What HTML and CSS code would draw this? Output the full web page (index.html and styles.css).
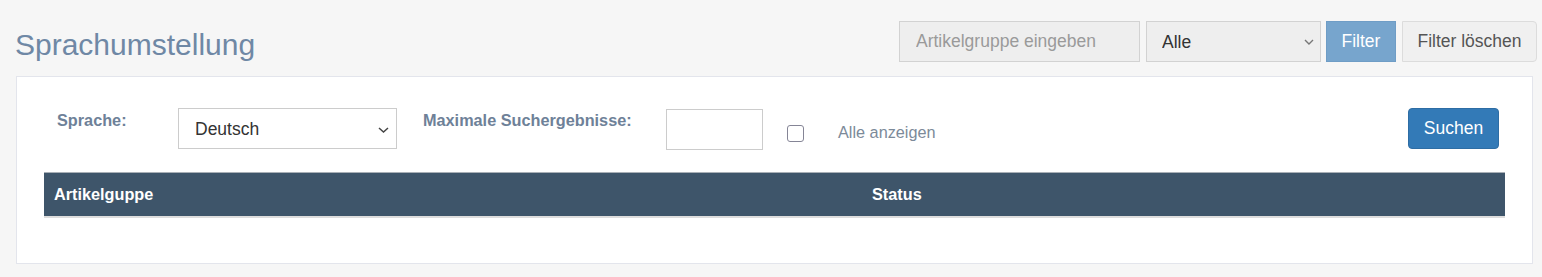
FILE: index.html
```html
<!DOCTYPE html>
<html lang="de">
<head>
<meta charset="utf-8">
<title>Sprachumstellung</title>
<link rel="stylesheet" href="styles.css">
</head>
<body>
<header class="page-header">
  <h1 class="page-title">Sprachumstellung</h1>
  <div class="toolbar">
    <input class="tb-input" type="text" placeholder="Artikelgruppe eingeben">
    <div class="select-wrap tb-select-wrap">
      <select class="tb-select"><option>Alle</option></select>
      <svg class="chev chev-light" width="10" height="6" viewBox="0 0 10 6"><path d="M1 1 L5 5 L9 1" fill="none" stroke="currentColor" stroke-width="1.4"/></svg>
    </div>
    <button class="btn btn-filter">Filter</button>
    <button class="btn btn-clear">Filter löschen</button>
  </div>
</header>

<section class="panel">
  <div class="form-row">
    <label class="lbl lbl-lang">Sprache:</label>
    <div class="select-wrap lang-select-wrap">
      <select class="lang-select"><option>Deutsch</option></select>
      <svg class="chev" width="11" height="6" viewBox="0 0 11 6"><path d="M1 1 L5.5 5 L10 1" fill="none" stroke="currentColor" stroke-width="1.5"/></svg>
    </div>
    <label class="lbl lbl-max">Maximale Suchergebnisse:</label>
    <input class="max-input" type="text">
    <span class="checkbox"></span>
    <span class="all-label">Alle anzeigen</span>
    <button class="btn btn-search">Suchen</button>
  </div>

  <table class="result-table">
    <thead>
      <tr>
        <th class="col-group">Artikelguppe</th>
        <th>Status</th>
      </tr>
    </thead>
  </table>
</section>
</body>
</html>
```

FILE: styles.css
```css
* { box-sizing: border-box; }

body {
  margin: 0;
  background: #f6f6f6;
  font-family: "Liberation Sans", Arial, sans-serif;
  color: #333;
}

.page-header {
  display: flex;
  justify-content: space-between;
  align-items: flex-start;
  padding: 21px 5px 0 15px;
}

.page-title {
  margin: 7px 0 0;
  font-size: 30px;
  line-height: 33px;
  font-weight: normal;
  color: #6f88a5;
}

.toolbar {
  display: flex;
  align-items: center;
}

.tb-input {
  width: 241px;
  height: 41px;
  border: 1px solid #d2d2d2;
  background: #eeeeee;
  padding: 0 16px;
  font-family: inherit;
  font-size: 17.5px;
  color: #555;
  outline: none;
}
.tb-input::placeholder { color: #9a9a9a; }

.select-wrap { position: relative; }

.tb-select-wrap { margin-left: 6px; }

.tb-select,
.lang-select {
  appearance: none;
  -webkit-appearance: none;
  height: 41px;
  font-family: inherit;
  font-size: 17.5px;
  padding: 0 15px;
  outline: none;
  border-radius: 0;
}

.tb-select {
  width: 175px;
  background: #eeeeee;
  border: 1px solid #d2d2d2;
  color: #333;
}

.chev {
  position: absolute;
  right: 8px;
  top: 19px;
  color: #444;
  pointer-events: none;
}
.chev-light { color: #777; right: 7px; top: 18px; }

.btn {
  height: 41px;
  font-family: inherit;
  font-size: 17.5px;
  cursor: pointer;
  padding: 0 10px;
  white-space: nowrap;
}

.btn-filter {
  margin-left: 5px;
  width: 70px;
  background: #77a5cd;
  border: 1px solid #6f9dc6;
  color: #fff;
  border-radius: 0;
}

.btn-clear {
  margin-left: 6px;
  width: 135px;
  background: #f0f0f0;
  border: 1px solid #dcdcdc;
  color: #555;
  border-radius: 0 4px 4px 0;
}

.panel {
  margin: 14px 9px 0 16px;
  background: #fff;
  border: 1px solid #e3e5ec;
  padding: 31px 27px 45px;
}

.form-row {
  display: flex;
  align-items: flex-start;
}

.lbl {
  font-size: 16.25px;
  line-height: 20px;
  font-weight: bold;
  color: #6e8198;
  margin-top: 2px;
}

.lbl-lang {
  margin-left: 13px;
  width: 121px;
}

.lang-select {
  width: 219px;
  background: #fff;
  border: 1px solid #cccccc;
  color: #333;
  padding-left: 16px;
}

.lbl-max {
  margin-left: 26px;
  width: 243px;
}

.max-input {
  margin-top: 1px;
  width: 97px;
  height: 41px;
  border: 1px solid #cccccc;
  background: #fff;
  outline: none;
}

.checkbox {
  margin: 17px 0 0 24px;
  width: 17px;
  height: 17px;
  border: 1px solid #858596;
  border-radius: 3px;
  background: #fff;
}

.all-label {
  margin: 14px 0 0 34px;
  font-size: 16.25px;
  line-height: 20px;
  color: #7c8a99;
}

.btn-search {
  margin: 0 6px 0 auto;
  width: 91px;
  background: #337ab7;
  border: 1px solid #2e6da4;
  color: #fff;
  border-radius: 4px;
}

.result-table {
  margin-top: 22px;
  width: 100%;
  border-collapse: collapse;
}

.result-table th {
  background: #3e556a;
  color: #fff;
  text-align: left;
  font-size: 16.25px;
  line-height: 23px;
  font-weight: bold;
  padding: 10px 10px;
  border-top: 1px solid #a9b0b7;
  border-bottom: 2px solid #dddddd;
}

.result-table th.col-group { width: 818px; }
```
